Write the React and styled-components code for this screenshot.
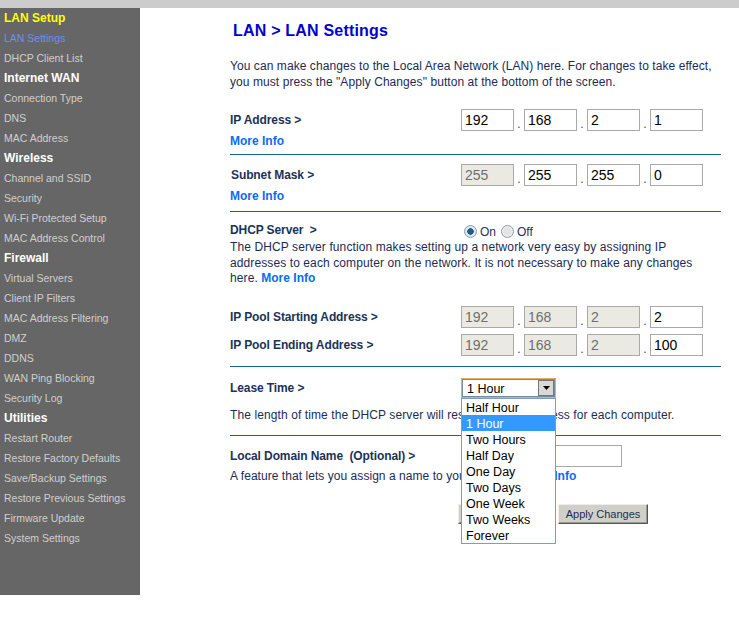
import React from "react";
import styled, { createGlobalStyle } from "styled-components";

const Global = createGlobalStyle`
  html, body { margin: 0; padding: 0; background: #fff; }
  body { font-family: "Liberation Sans", Arial, sans-serif; font-size: 12px; color: #1b2c55; }
`;
const Page = styled.div`width: 739px; height: 630px; overflow: hidden; position: relative;`;
const TopBar = styled.div`height: 8px; background: #cccccc;`;
const Body = styled.div`display: flex; align-items: flex-start;`;
const Sidebar = styled.nav`width: 140px; height: 587px; background: #666666; flex: none; box-sizing: border-box; padding-left: 4px;`;
const NavItem = styled.div`
  height: 20px; line-height: 20px; white-space: nowrap;
  font-size: ${p => (p.$head ? "12px" : "10.5px")};
  font-weight: ${p => (p.$head ? 700 : 400)};
  color: ${p => (p.$color ? p.$color : p.$head ? "#ffffff" : "#cfcfcf")};
`;
const Main = styled.main`width: 491px; margin-left: 90px; flex: none; position: relative;`;
const Title = styled.h1`margin: 0 0 0 3px; padding-top: 13px; height: 35px; line-height: 20px; font-size: 16px; letter-spacing: 0.2px; font-weight: 700; color: #0000cc;`;
const Intro = styled.p`margin: 0; padding-top: 2px; line-height: 16px; height: 51px; width: 491px; font-size: 12px; letter-spacing: 0.07px; white-space: nowrap;`;
const Section = styled.section`display: flow-root; border-bottom: 1px solid ${p => (p.$plain ? "transparent" : "#15638f")}; height: ${p => p.$h}px; box-sizing: border-box;`;
const Row = styled.div`display: flex; align-items: center; height: ${p => p.$h || 22}px; margin-top: ${p => p.$mt || 0}px;`;
const Label = styled.div`width: 231px; flex: none; padding-left: ${p => p.$pl || 0}px; box-sizing: border-box; font-weight: 700; font-size: 12px; letter-spacing: -0.1px; color: #1b3358; white-space: pre;`;
const Octets = styled.div`display: flex; align-items: center;`;
const Octet = styled.div`
  width: 53px; height: 22px; box-sizing: border-box; border: 1px solid #a9a9a9;
  background: ${p => (p.$off ? "#eaeae3" : "#fff")}; color: ${p => (p.$off ? "#6e6e6e" : "#000")};
  font-size: 14px; line-height: 20px; padding-left: 3px;
`;
const Dot = styled.span`width: 10px; text-align: center; font-size: 12px; color: #444; line-height: 12px; padding-top: 8px;`;
const More = styled.a`font-weight: 700; font-size: 12px; letter-spacing: 0; color: #0a6cf0; text-decoration: none;`;
const MoreRow = styled.div`height: 16px; line-height: 16px; margin-top: ${p => p.$mt || 0}px;`;
const Para = styled.p`margin: ${p => p.$mt || 0}px 0 0; line-height: 15.5px; font-size: 12px; letter-spacing: ${p => p.$ls ?? 0.1}px; white-space: nowrap;`;
const Radios = styled.div`display: flex; align-items: center; font-size: 12px; color: #1b3358; gap: 3px; padding-top: 3px;`;
const Radio = styled.span`
  width: 13px; height: 13px; box-sizing: border-box; border-radius: 50%; border: 1px solid #8f9aa5;
  background: radial-gradient(circle, ${p => (p.$on ? "#1c5f8f 0 3px, #dfe8ef 3.5px" : "#e4e4e4 0 3px, #f2f2f2 6px")});
  margin-left: ${p => p.$ml || 0}px;
`;
const RadioText = styled.span`padding-top: 1px;`;
const SelectWrap = styled.div`position: relative; width: 95px; height: 20px;`;
const SelectBox = styled.div`
  width: 95px; height: 20px; box-sizing: border-box; border: 1px solid #e0b060; outline: 0;
  background: #fff; display: flex; align-items: center; justify-content: space-between;
  box-shadow: inset 0 0 0 1px #7a8a9a; font-size: 12.5px; color: #000; padding: 0 1px 0 5px;
`;
const SelectValue = styled.span`padding-top: 2px;`;
const Arrow = styled.span`
  width: 16px; height: 16px; background: #d8d8d4; border: 1px solid #777; box-sizing: border-box;
  display: flex; align-items: center; justify-content: center;
`;
const List = styled.ul`
  position: absolute; left: 0; top: 20px; z-index: 2; margin: 0; padding: 0; list-style: none;
  width: 95px; box-sizing: border-box; border: 1px solid #7f9db9; background: #fff; height: 146px;
`;
const Option = styled.li`
  height: 16px; line-height: 18px; padding-left: 4px; font-size: 12.5px;
  color: ${p => (p.$sel ? "#fff" : "#000")}; background: ${p => (p.$sel ? "#3399ff" : "transparent")};
`;
const DomainInput = styled.div`width: 161px; height: 22px; box-sizing: border-box; border: 1px solid #a9a9a9; background: #fff;`;
const Buttons = styled.div`display: flex; gap: 8px; margin: 8px 0 0 228px;`;
const Button = styled.button`
  width: ${p => p.$w}px; height: 20px; padding: 0; box-sizing: border-box; background: #d0d0c8;
  border: 1px solid; border-color: #ededed #555 #555 #ededed; box-shadow: inset -1px -1px 0 #999;
  font: 11px "Liberation Sans", Arial, sans-serif; color: #1b2c55;
`;

const nav = [
  ["LAN Setup", true, "#ffff00"], ["LAN Settings", false, "#6c8ff0"], ["DHCP Client List"],
  ["Internet WAN", true], ["Connection Type"], ["DNS"], ["MAC Address"],
  ["Wireless", true], ["Channel and SSID"], ["Security"], ["Wi-Fi Protected Setup"], ["MAC Address Control"],
  ["Firewall", true], ["Virtual Servers"], ["Client IP Filters"], ["MAC Address Filtering"], ["DMZ"], ["DDNS"], ["WAN Ping Blocking"], ["Security Log"],
  ["Utilities", true], ["Restart Router"], ["Restore Factory Defaults"], ["Save/Backup Settings"], ["Restore Previous Settings"], ["Firmware Update"], ["System Settings"],
];
const options = ["Half Hour", "1 Hour", "Two Hours", "Half Day", "One Day", "Two Days", "One Week", "Two Weeks", "Forever"];

const Ip = ({ values, off = 0 }) => (
  <Octets>
    {values.map((v, i) => (
      <React.Fragment key={i}>
        {i > 0 && <Dot>.</Dot>}
        <Octet $off={i < off}>{v}</Octet>
      </React.Fragment>
    ))}
  </Octets>
);

export default function App() {
  return (
    <Page>
      <Global />
      <TopBar />
      <Body>
        <Sidebar>
          {nav.map(([t, h, c]) => <NavItem key={t} $head={h} $color={c}>{t}</NavItem>)}
        </Sidebar>
        <Main>
          <Title>LAN &gt; LAN Settings</Title>
          <Intro>
            You can make changes to the Local Area Network (LAN) here. For changes to take effect,<br />
            you must press the "Apply Changes" button at the bottom of the screen.
          </Intro>
          <Section $h={46}>
            <Row><Label>IP Address &gt;</Label><Ip values={[192, 168, 2, 1]} /></Row>
            <MoreRow $mt={2}><More>More Info</More></MoreRow>
          </Section>
          <Section $h={57}>
            <Row $mt={9}><Label $pl={1}>Subnet Mask &gt;</Label><Ip values={[255, 255, 255, 0]} off={1} /></Row>
            <MoreRow $mt={2}><More>More Info</More></MoreRow>
          </Section>
          <Section $plain $h={94}>
            <Row $mt={10} $h={16}>
              <Label>{"DHCP Server  >"}</Label>
              <Radios>
                <Radio $on $ml={3} /><RadioText>On</RadioText>
                <Radio $ml={2} /><RadioText>Off</RadioText>
              </Radios>
            </Row>
            <Para $mt={2}>
              The DHCP server function makes setting up a network very easy by assigning IP<br />
              addresses to each computer on the network. It is not necessary to make any changes<br />
              here. <More>More Info</More>
            </Para>
          </Section>
          <Section $h={61}>
            <Row><Label>IP Pool Starting Address &gt;</Label><Ip values={[192, 168, 2, 2]} off={3} /></Row>
            <Row $mt={6}><Label>IP Pool Ending Address &gt;</Label><Ip values={[192, 168, 2, 100]} off={3} /></Row>
          </Section>
          <Section $h={69}>
            <Row $mt={11} $h={20}>
              <Label>Lease Time &gt;</Label>
              <SelectWrap>
                <SelectBox>
                  <SelectValue>1 Hour</SelectValue>
                  <Arrow>
                    <svg width="7" height="4" viewBox="0 0 7 4"><path d="M0 0h7L3.5 4z" fill="#000" /></svg>
                  </Arrow>
                </SelectBox>
                <List>
                  {options.map(o => <Option key={o} $sel={o === "1 Hour"}>{o}</Option>)}
                </List>
              </SelectWrap>
            </Row>
            <Para $mt={10}>The length of time the DHCP server will reserve the IP address for each computer.</Para>
          </Section>
          <Section $plain $h={60}>
            <Row $mt={9}>
              <Label>Local Domain Name  (Optional) &gt;</Label>
              <DomainInput />
            </Row>
            <Para $mt={2} $ls={0.05}>A feature that lets you assign a name to your network. <More>More Info</More></Para>
          </Section>
          <Buttons>
            <Button $w={92}>Clear Changes</Button>
            <Button $w={90}>Apply Changes</Button>
          </Buttons>
        </Main>
      </Body>
    </Page>
  );
}
